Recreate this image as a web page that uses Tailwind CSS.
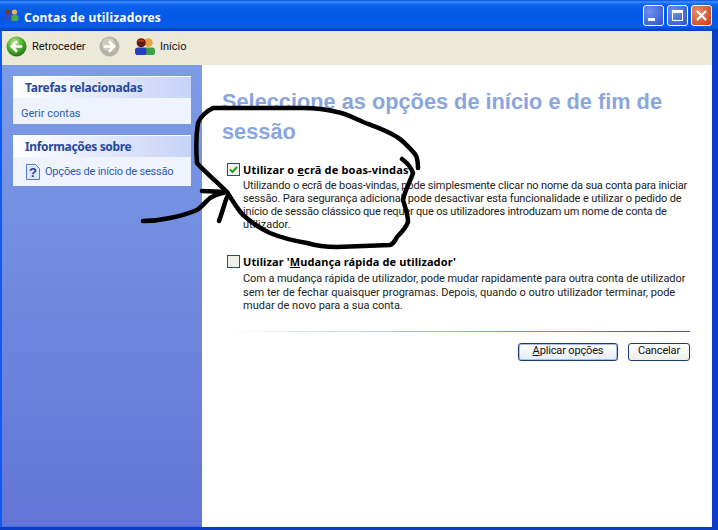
<!DOCTYPE html>
<html lang="en">
<head>
<meta charset="UTF-8">
<title>Contas de utilizadores</title>
<script src="https://cdn.jsdelivr.net/npm/@tailwindcss/browser@4"></script>
</head>
<body class="m-0 overflow-hidden bg-white">
<div class="relative w-[718px] h-[530px] flex flex-col overflow-hidden font-['Noto_Sans','Liberation_Sans',sans-serif] text-[11px] text-black bg-[#0a3cc8]">
  <!-- title bar -->
  <div class="h-[31px] shrink-0 flex items-center justify-between pl-[4px] pr-[6px] bg-[linear-gradient(180deg,#0a4fd8_0%,#3a8cff_6%,#0a60ea_16%,#0058e6_60%,#0a5cf0_85%,#0040b8_100%)]">
    <div class="flex items-center gap-[5px] pt-[4px]">
      <svg class="-mt-[5px]" width="15" height="14" viewBox="0 0 15 14">
        <circle cx="10.5" cy="4" r="2.6" fill="#f0b060"/><rect x="7" y="7" width="7.5" height="6" rx="2" fill="#48a848"/>
        <circle cx="4" cy="4" r="2.6" fill="#7a3a20"/><rect x="0.5" y="7" width="7" height="6" rx="2" fill="#2a4fc0"/>
      </svg>
      <span class="font-bold text-[12px] text-white tracking-[0.2px] leading-none">Contas de utilizadores</span>
    </div>
    <div class="flex items-center gap-[3px] pb-[1px]">
      <div class="w-[21px] h-[21px] rounded-[3px] border border-white bg-[radial-gradient(circle_at_30%_30%,#6f92ec,#2b51d0)] flex items-end pl-[4px] pb-[4px]"><div class="w-[7px] h-[3px] bg-white"></div></div>
      <div class="w-[21px] h-[21px] rounded-[3px] border border-white bg-[radial-gradient(circle_at_30%_30%,#6f92ec,#2b51d0)] flex items-center justify-center"><div class="w-[11px] h-[11px] border border-white border-t-[3px]"></div></div>
      <div class="w-[21px] h-[21px] rounded-[3px] border border-white bg-[radial-gradient(circle_at_30%_30%,#ea8a6c,#c63c18)] flex items-center justify-center">
        <svg width="13" height="13" viewBox="0 0 13 13"><path d="M2 2l9 9M11 2l-9 9" stroke="#fff" stroke-width="2.2"/></svg>
      </div>
    </div>
  </div>
  <!-- window body -->
  <div class="flex-1 min-h-0 flex flex-col border-l-2 border-l-[#0a5cf4] mr-[6px] mb-[3px]">
    <!-- toolbar -->
    <div class="h-[34px] shrink-0 bg-[#ece9d8] flex items-center pl-[4px] pb-[3px]">
      <svg width="21" height="21" viewBox="0 0 22 22">
        <defs><radialGradient id="g" cx="40%" cy="30%" r="75%"><stop offset="0" stop-color="#b8e88a"/><stop offset="0.55" stop-color="#4bab2c"/><stop offset="1" stop-color="#1c6e12"/></radialGradient></defs>
        <circle cx="11" cy="11" r="10.5" fill="url(#g)"/>
        <path d="M17 11H7M11.5 5.5L6 11l5.5 5.5" fill="none" stroke="#fff" stroke-width="2.8"/>
      </svg>
      <span class="w-[54px] ml-[5px] font-['Roboto',sans-serif] text-[#111] leading-none whitespace-nowrap">Retroceder</span>
      <svg class="ml-[13px]" width="21" height="21" viewBox="0 0 22 22">
        <circle cx="11" cy="11" r="10.5" fill="#b5b2a6"/><circle cx="10" cy="9" r="7" fill="#cdcabf"/>
        <path d="M5 11h10M10.5 5.5L16 11l-5.5 5.5" fill="none" stroke="#fff" stroke-width="2.8"/>
      </svg>
      <svg class="ml-[14px]" width="22" height="19" viewBox="0 0 23 20">
        <circle cx="15" cy="6" r="4.6" fill="#e8a040"/><rect x="9" y="11" width="13" height="8" rx="3" fill="#3fa048"/>
        <circle cx="7.5" cy="6" r="4.8" fill="#5a1e10"/><path d="M3.5 5a4.5 4.5 0 018 0z" fill="#c03020"/><rect x="1" y="11" width="12" height="8" rx="3" fill="#2440c0"/>
      </svg>
      <span class="ml-[4px] font-['Roboto',sans-serif] text-[#111] leading-none">Início</span>
    </div>
    <div class="flex-1 min-h-0 flex">
      <!-- sidebar -->
      <aside class="w-[200px] shrink-0 bg-[linear-gradient(180deg,#7c9ce6_0%,#6375d6_100%)] border-b border-[#3f6cf0] pt-[11px] px-[11px] flex flex-col gap-[11px]">
        <section>
          <h2 class="h-[22px] pl-[12px] flex items-center font-bold text-[12px] tracking-[-0.25px] text-[#27479c] bg-[linear-gradient(90deg,#ffffff,#c6d3f7)] border-t border-white">Tarefas relacionadas</h2>
          <div class="h-[26px] pl-[8px] pt-[6px] flex items-center bg-[#eff3fd] font-['Roboto',sans-serif] text-[#2f5bb5]">Gerir contas</div>
        </section>
        <section>
          <h2 class="h-[22px] pl-[12px] flex items-center font-bold text-[12px] tracking-[-0.35px] text-[#27479c] bg-[linear-gradient(90deg,#ffffff,#c6d3f7)] border-t border-white">Informações sobre</h2>
          <div class="h-[29px] pl-[13px] flex items-center gap-[5px] bg-[#eff3fd] font-['Roboto',sans-serif] text-[#2f5bb5]">
            <svg width="14" height="16" viewBox="0 0 14 16"><path d="M.5.5h9l4 4v11H.5z" fill="#dfe8fa" stroke="#5a7cc8"/><text x="7" y="13" text-anchor="middle" font-family="Liberation Sans" font-weight="700" font-size="13" fill="#1f3f9c">?</text></svg>
            <span class="whitespace-nowrap tracking-[-0.2px] pt-[1px]">Opções de início de sessão</span>
          </div>
        </section>
      </aside>
      <!-- main panel -->
      <main class="flex-1 min-w-0 bg-white pl-[20px] pr-[22px] pt-[22px]">
        <h1 class="font-['Liberation_Sans',sans-serif] font-bold text-[21.75px] leading-[30px] text-[#8aa5e0] whitespace-nowrap">Seleccione as opções de início e de fim de<br>sessão</h1>
        <div class="mt-[15px] pl-[5px] flex gap-[3px]">
          <div class="w-[13px] h-[13px] mt-[1px] shrink-0 border border-[#1c5180] bg-[#f0f0e8] flex items-center justify-center">
            <svg width="9" height="9" viewBox="0 0 9 9"><path d="M1 4.5l2.5 2.5L8 2" fill="none" stroke="#21a121" stroke-width="2"/></svg>
          </div>
          <div class="whitespace-nowrap">
            <div class="font-bold leading-[15px] tracking-[0.17px]">Utilizar o <span class="underline">e</span>crã de boas-vindas</div>
            <div class="font-['Roboto',sans-serif] leading-[13px] mt-[2px] text-[#222]">
              <p class="tracking-[-0.14px]">Utilizando o ecrã de boas-vindas, pode simplesmente clicar no nome da sua conta para iniciar</p>
              <p class="tracking-[-0.12px]">sessão. Para segurança adicional, pode desactivar esta funcionalidade e utilizar o pedido de</p>
              <p class="tracking-[-0.18px]">início de sessão clássico que requer que os utilizadores introduzam um nome de conta de</p>
              <p>utilizador.</p>
            </div>
          </div>
        </div>
        <div class="mt-[23px] pl-[5px] flex gap-[3px]">
          <div class="w-[13px] h-[13px] mt-[1px] shrink-0 border border-[#1c5180] bg-[#f0f0e8]"></div>
          <div class="whitespace-nowrap">
            <div class="font-bold leading-[15px] tracking-[0.1px]">Utilizar '<span class="underline">M</span>udança rápida de utilizador'</div>
            <div class="font-['Roboto',sans-serif] leading-[13.5px] mt-[3px] text-[#222]">
              <p class="tracking-[-0.08px]">Com a mudança rápida de utilizador, pode mudar rapidamente para outra conta de utilizador</p>
              <p>sem ter de fechar quaisquer programas. Depois, quando o outro utilizador terminar, pode</p>
              <p>mudar de novo para a sua conta.</p>
            </div>
          </div>
        </div>
        <div class="mt-[18px] ml-[8px] h-px bg-[linear-gradient(90deg,#ffffff,#8ab0e0_50%,#1f5fa8)]"></div>
        <div class="mt-[11px] flex justify-end gap-[10px]">
          <button class="w-[100px] h-[18px] rounded-[3px] border border-[#1c3c78] bg-[linear-gradient(180deg,#fff,#e6ebf5)] shadow-[inset_0_0_0_1px_#a8c0e8] flex items-center justify-center font-['Roboto',sans-serif] tracking-[-0.15px] text-[#111]"><span><span class="underline">A</span>plicar opções</span></button>
          <button class="w-[62px] h-[18px] rounded-[3px] border border-[#1c3c78] bg-[linear-gradient(180deg,#fff,#f0eee4)] flex items-center justify-center font-['Roboto',sans-serif] tracking-[-0.15px] text-[#111]">Cancelar</button>
        </div>
      </main>
    </div>
  </div>
  <!-- hand drawn marker over the window -->
  <svg class="absolute inset-0 pointer-events-none" width="718" height="530" viewBox="0 0 718 530" fill="none" stroke="#000" stroke-width="4.5" stroke-linecap="round" stroke-linejoin="round">
    <path d="M418 168C418 161 417 157 415 154C408 146 402 140 397 137C388 131 376 127 363 122C354 118 345 113 337 112C325 109 314 108 303 108L213 108C205 112 200 118 198 123C196 135 196 150 197 163C205 172 217 182 227 192C232 200 238 210 243 215C252 223 261 229 270 233C282 238 295 241 307 243C317 246 327 247 337 247L390 245C394 244 395 240 397 237C402 232 406 228 408 222C408 214 405 207 403 200C405 190 410 182 413 173C411 167 406 162 402 159"/>
    <path d="M143 221C152 221 161 220 170 218C180 216 190 213 197 210C203 206 206 201 210 198C215 195 221 193 227 192L202 191"/>
    <path d="M219 221C222 213 224 205 227 197"/>
  </svg>
</div>
</body>
</html>
